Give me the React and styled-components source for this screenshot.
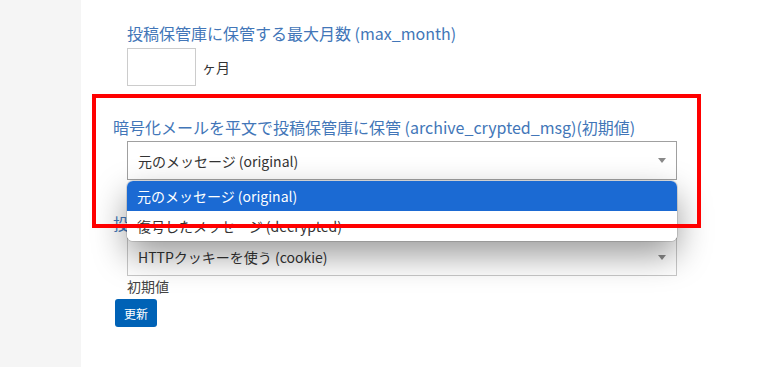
import React from 'react';
import styled, { createGlobalStyle } from 'styled-components';

const GlobalStyle = createGlobalStyle`
  body {
    margin: 0;
    background: #fff;
    font-family: "Noto Sans CJK JP", "Noto Sans", sans-serif;
    color: #333;
  }
`;

const StyledPage = styled.div`
  display: flex;
  width: 763px;
  height: 367px;
  overflow: hidden;
`;

const StyledSidebar = styled.aside`
  width: 81px;
  flex-shrink: 0;
  background: #f5f5f5;
`;

const StyledMain = styled.main`
  position: relative;
  flex: 1;
  padding: 23px 0 0 32px;
`;

const StyledField = styled.div`
  display: flex;
  flex-direction: column;
  align-items: flex-start;
  margin-left: ${(p) => (p.indent ? '14px' : '0')};
  margin-top: ${(p) => p.top || 0}px;
`;

const StyledLabel = styled.label`
  font-size: 16px;
  line-height: 20px;
  color: #4276b8;
  white-space: nowrap;
`;

const StyledInputRow = styled.div`
  display: flex;
  align-items: center;
  gap: 6px;
  margin-top: 5px;
  font-size: 14px;
  color: #333;
`;

const StyledNumberInput = styled.div`
  width: 67px;
  height: 36px;
  border: 1px solid #ccc;
  background: #fff;
`;

const StyledSelectWrap = styled.div`
  position: relative;
  margin: ${(p) => p.mt || 0}px 0 0 14px;
  width: 550px;
`;

const StyledSelect = styled.div`
  display: flex;
  align-items: center;
  justify-content: space-between;
  box-sizing: border-box;
  height: ${(p) => p.h}px;
  padding: 0 10px 0 10px;
  border: 1px solid ${(p) => (p.muted ? '#c8c8c8' : '#a0a0a0')};
  background: #fff;
  font-size: 14px;
  color: #333;
`;

const StyledArrow = styled.span`
  width: 0;
  height: 0;
  border-left: 4px solid transparent;
  border-right: 4px solid transparent;
  border-top: 5px solid #8a8a8a;
`;

const StyledDropdown = styled.ul`
  position: absolute;
  z-index: 2;
  top: calc(100% + 1px);
  left: 0;
  right: 0;
  margin: 0;
  padding: 0;
  list-style: none;
  background: #fff;
  border-radius: 6px;
  overflow: hidden;
  box-shadow: 0 0 0 1px rgba(0, 0, 0, 0.12), 0 14px 34px rgba(0, 0, 0, 0.4);
`;

const StyledOption = styled.li`
  height: 30px;
  display: flex;
  align-items: center;
  padding-left: 10px;
  font-size: 14px;
  background: ${(p) => (p.active ? '#1b6ad3' : '#fff')};
  color: ${(p) => (p.active ? '#fff' : '#333')};
`;

const StyledHint = styled.div`
  margin: 1px 0 0 14px;
  font-size: 14px;
  line-height: 18px;
  color: #444;
`;

const StyledButton = styled.button`
  margin: 4px 0 0 2px;
  width: 42px;
  height: 28px;
  padding: 0;
  border: none;
  border-radius: 3px;
  background: #0062b6;
  color: #fff;
  font-family: inherit;
  font-size: 12px;
`;

const StyledAnnotation = styled.div`
  position: absolute;
  z-index: 3;
  left: 11px;
  top: 94px;
  width: 601px;
  height: 126px;
  border: 4px solid #ff0000;
  pointer-events: none;
`;

const App = () => (
  <StyledPage>
    <GlobalStyle />
    <StyledSidebar />
    <StyledMain>
      <StyledField indent>
        <StyledLabel>投稿保管庫に保管する最大月数 (max_month)</StyledLabel>
        <StyledInputRow>
          <StyledNumberInput />
          <span>ヶ月</span>
        </StyledInputRow>
      </StyledField>

      <StyledField top={31}>
        <StyledLabel>暗号化メールを平文で投稿保管庫に保管 (archive_crypted_msg)(初期値)</StyledLabel>
      </StyledField>
      <StyledSelectWrap mt={4}>
        <StyledSelect h={39}>
          <span>元のメッセージ (original)</span>
          <StyledArrow />
        </StyledSelect>
        <StyledDropdown>
          <StyledOption active>元のメッセージ (original)</StyledOption>
          <StyledOption>復号したメッセージ (decrypted)</StyledOption>
        </StyledDropdown>
      </StyledSelectWrap>

      <StyledField top={33}>
        <StyledLabel>投稿保管庫の認証情報の保存方法 (auth_method)</StyledLabel>
      </StyledField>
      <StyledSelectWrap mt={5}>
        <StyledSelect h={38} muted>
          <span>HTTPクッキーを使う (cookie)</span>
          <StyledArrow />
        </StyledSelect>
      </StyledSelectWrap>
      <StyledHint>初期値</StyledHint>
      <StyledButton>更新</StyledButton>

      <StyledAnnotation />
    </StyledMain>
  </StyledPage>
);

export default App;
